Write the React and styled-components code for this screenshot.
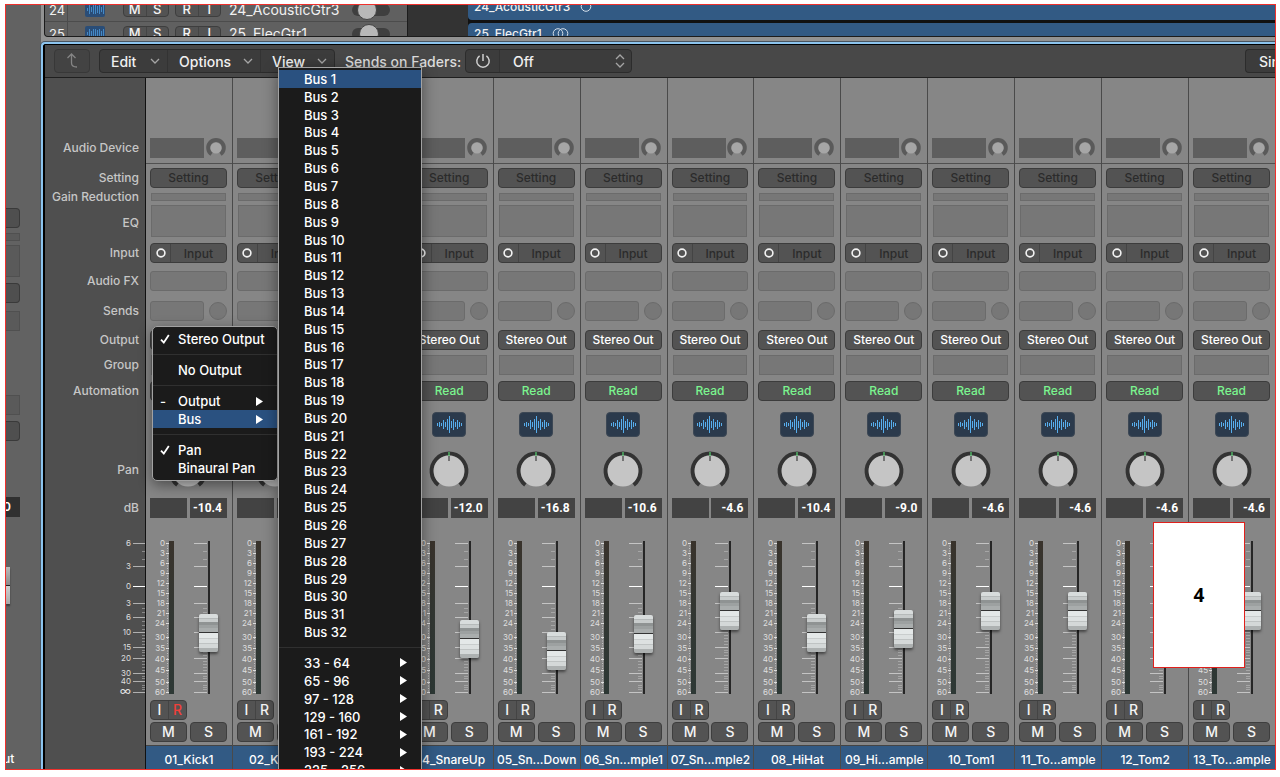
import React from "react";
import styled, { createGlobalStyle } from "styled-components";

const tracks = [
  { number: "24", name: "24_AcousticGtr3", volume: 5, stereo: false },
  { number: "25", name: "25_ElecGtr1", volume: 7, stereo: true },
];

const channels = [
  { name: "01_Kick1", db: "-10.4", level: 42, armed: true },
  { name: "02_Kick2", db: "-10.4", level: 42 },
  { name: "03_Snare", db: "-12.0", level: 36 },
  { name: "04_SnareUp", db: "-12.0", level: 36 },
  { name: "05_Sn...Down", db: "-16.8", level: 24 },
  { name: "06_Sn...mple1", db: "-10.6", level: 41 },
  { name: "07_Sn...mple2", db: "-4.6", level: 64 },
  { name: "08_HiHat", db: "-10.4", level: 42 },
  { name: "09_Hi...ample", db: "-9.0", level: 46 },
  { name: "10_Tom1", db: "-4.6", level: 64 },
  { name: "11_To...ample", db: "-4.6", level: 64 },
  { name: "12_Tom2", db: "-4.6", level: 64 },
  { name: "13_To...ample", db: "-4.6", level: 64 },
];

const buses = Array.from({ length: 32 }, (_, i) => `Bus ${i + 1}`);
const busRanges = [
  "33 - 64",
  "65 - 96",
  "97 - 128",
  "129 - 160",
  "161 - 192",
  "193 - 224",
  "225 - 256",
];

const meterMarks = [
  ["0", 2],
  ["3", 12],
  ["6", 22],
  ["9", 32],
  ["12", 42],
  ["15", 52],
  ["18", 62],
  ["21", 72],
  ["24", 82],
  ["30", 96],
  ["35", 107],
  ["40", 118],
  ["45", 129],
  ["50", 141],
  ["60", 151],
];

const faderMarks = [
  ["6", 2],
  ["3", 25],
  ["0", 45],
  ["3", 62],
  ["6", 76],
  ["10", 91],
  ["15", 106],
  ["20", 117],
  ["30", 132],
  ["40", 140],
  ["∞", 151],
];
const faderMinor = [
  10, 18, 67, 71, 80, 84, 88, 94, 97, 100, 103, 109, 111, 114, 120, 123, 126,
  129, 135, 137, 144, 146, 148,
];

// bar heights of the audio icon, left to right
const bars = [3, 5, 3, 9, 5, 11, 17, 7, 11, 5, 9, 5, 3];

function Wave() {
  return (
    <WaveBars aria-hidden="true">
      {bars.map((height, i) => (
        <WaveBar key={i} $height={height} />
      ))}
    </WaveBars>
  );
}

function Chevron() {
  return (
    <svg width="10" height="6" viewBox="0 0 10 6" fill="none" aria-hidden="true">
      <path d="M1 1l4 4 4-4" stroke="#a5a5a5" strokeWidth="1.3" />
    </svg>
  );
}

function Arrow() {
  return (
    <svg width="7" height="9" viewBox="0 0 7 9" aria-hidden="true">
      <path d="M0 0l7 4.5L0 9z" fill="#fff" />
    </svg>
  );
}

function Check() {
  return (
    <svg width="10" height="10" viewBox="0 0 10 10" fill="none" aria-hidden="true">
      <path d="M1 5.6l2.8 3L8.8 1" stroke="#fff" strokeWidth="1.8" />
    </svg>
  );
}

function MeterScale() {
  return (
    <svg width="19" height="156" viewBox="0 0 19 156" aria-hidden="true">
      <line
        x1="17.5"
        x2="17.5"
        y1="2"
        y2="152"
        stroke="#c2c2c2"
        strokeDasharray="1 1.5"
      />
      {meterMarks.map(([label, y]) => (
        <g key={label}>
          <rect x="16" y={y} width="3" height="1" fill="#dedede" />
          <ScaleText x="15" y={y + 3}>
            {label}
          </ScaleText>
        </g>
      ))}
    </svg>
  );
}

function FaderTicks() {
  return (
    <svg width="13" height="153" viewBox="0 0 13 153" aria-hidden="true">
      {faderMarks.map(([, y]) => (
        <rect
          key={y}
          x="0"
          y={y}
          width="13"
          height="1"
          fill={y === 45 ? "#fff" : "#c4c4c4"}
        />
      ))}
      {faderMinor.map((y) => (
        <rect key={y} x="9" y={y} width="4" height="1" fill="#a6a6a6" />
      ))}
    </svg>
  );
}

function FaderScale() {
  return (
    <svg width="26" height="156" viewBox="0 0 26 156" aria-hidden="true">
      {faderMarks.map(([label, y]) => (
        <g key={y}>
          <rect
            x="14"
            y={y}
            width="12"
            height="1"
            fill={y === 45 ? "#fff" : "#b0b0b0"}
          />
          <ScaleText x="12" y={y + 3} $large={label === "∞"}>
            {label}
          </ScaleText>
        </g>
      ))}
      {faderMinor.map((y) => (
        <rect key={y} x="23" y={y} width="3" height="1" fill="#8a8a8a" />
      ))}
    </svg>
  );
}

function Channel({ name, db, level, armed }) {
  return (
    <Strip>
      <Device>
        <DeviceSlot />
        <svg width="20" height="20" viewBox="0 0 20 20" aria-hidden="true">
          <path
            d="M5.6 16.2A7.8 7.8 0 1 1 14.4 16.2"
            fill="none"
            stroke="#5a5a5a"
            strokeWidth="4"
          />
          <circle cx="10" cy="10" r="5.6" fill="#a6a6a6" />
        </svg>
      </Device>
      <Cell>
        <SlotButton $color="#2b2b2b">Setting</SlotButton>
      </Cell>
      <Cell $inset>
        <Empty $height={8} />
      </Cell>
      <Cell $inset>
        <Empty $height={32} />
      </Cell>
      <Cell>
        <InputSlot>
          <FormatButton aria-label="Input format">
            <svg width="10" height="10" viewBox="0 0 10 10" aria-hidden="true">
              <circle
                cx="5"
                cy="5"
                r="3.9"
                fill="none"
                stroke="#f2f2f2"
                strokeWidth="1.6"
              />
            </svg>
          </FormatButton>
          <InputButton>Input</InputButton>
        </InputSlot>
      </Cell>
      <Cell>
        <Empty $height={20} $round />
      </Cell>
      <Cell>
        <Empty $height={20} $round />
        <SendKnob />
      </Cell>
      <Cell>
        <SlotButton $color="#fff">Stereo Out</SlotButton>
      </Cell>
      <Cell $inset>
        <Empty $height={20} />
      </Cell>
      <Cell>
        <SlotButton $color="#7bf58f">Read</SlotButton>
      </Cell>
      <Cell $center>
        <ChannelIcon>
          <Wave />
        </ChannelIcon>
      </Cell>
      <Cell $center>
        <svg
          width="40"
          height="38"
          viewBox="0 0 40 38"
          role="img"
          aria-label="Pan"
        >
          <path
            d="M9.4 33.8A17.4 17.4 0 1 1 30.6 33.8"
            fill="none"
            stroke="#333"
            strokeWidth="4"
          />
          <circle cx="20" cy="20" r="15.4" fill="#c5c5c5" />
          <rect x="19.5" y="1" width="1" height="4" fill="#5cf07c" />
          <rect x="19.5" y="5" width="1" height="5" fill="#222" />
        </svg>
      </Cell>
      <Cell>
        <Readout />
        <Readout>{db}</Readout>
      </Cell>
      <Cell>
        <MeterScale />
        <Meter />
        <FaderTicks />
        <Fader
          type="range"
          min="0"
          max="115"
          defaultValue={level}
          aria-label={`${name} volume`}
        />
      </Cell>
      <Cell>
        <Pair>
          <button>I</button>
          <RecordButton $armed={armed}>R</RecordButton>
        </Pair>
      </Cell>
      <Cell>
        <MuteButton>M</MuteButton>
        <MuteButton>S</MuteButton>
      </Cell>
      <ChannelName>{name}</ChannelName>
    </Strip>
  );
}

function Item({ label, mark, arrow, active }) {
  return (
    <li>
      <MenuButton $active={active}>
        <Mark>{mark}</Mark>
        {label}
        {arrow && <Arrow />}
      </MenuButton>
    </li>
  );
}

export default function App() {
  return (
    <>
      <GlobalStyle />
      <Frame>
        <Neighbour>
          <SideBox $height={20} $solid />
          <SideBox $height={8} $gap={5} />
          <SideBox $height={32} $gap={4} />
          <SideBox $height={20} $gap={6} $solid />
          <SideBox $height={20} $gap={8} />
          <SideBox $height={20} $gap={64} />
          <SideBox $height={20} $gap={6} $solid />
          <SideReadout>0</SideReadout>
          <SideThumb />
          <SideName>ut</SideName>
        </Neighbour>
        <Main>
          <Arrange>
            <TrackList>
              {tracks.map((track) => (
                <TrackRow key={track.number}>
                  <TrackNumber>{track.number}</TrackNumber>
                  <TrackIcon>
                    <Wave />
                  </TrackIcon>
                  <TrackPair>
                    <button>M</button>
                    <button>S</button>
                  </TrackPair>
                  <TrackPair>
                    <button>R</button>
                    <button>I</button>
                  </TrackPair>
                  <TrackName>{track.name}</TrackName>
                  <TrackVolume
                    type="range"
                    min="0"
                    max="18"
                    defaultValue={track.volume}
                    aria-label={`${track.name} volume`}
                  />
                </TrackRow>
              ))}
            </TrackList>
            <Regions>
              {tracks.map((track) => (
                <Region key={track.number}>
                  {track.name}
                  <svg
                    width="18"
                    height="11"
                    viewBox="0 0 18 11"
                    fill="none"
                    stroke="#d5dfea"
                    aria-hidden="true"
                  >
                    <circle cx="8" cy="5.5" r="4.8" />
                    {track.stereo && <circle cx="13" cy="5.5" r="4.8" />}
                  </svg>
                </Region>
              ))}
            </Regions>
          </Arrange>
          <Mixer>
            <Toolbar>
              <BackButton aria-label="Back">
                <svg
                  width="14"
                  height="16"
                  viewBox="0 0 14 16"
                  fill="none"
                  stroke="#858585"
                  strokeWidth="1.3"
                  aria-hidden="true"
                >
                  <path d="M2.500 5L6.500 1l4 4M6.500 1v9q0 4 5.500 4" />
                </svg>
              </BackButton>
              <ButtonGroup>
                <ToolButton $width={67}>
                  Edit <Chevron />
                </ToolButton>
                <ToolButton $width={93}>
                  Options <Chevron />
                </ToolButton>
                <ToolButton $width={74}>
                  View <Chevron />
                </ToolButton>
              </ButtonGroup>
              <SendsLabel htmlFor="sends">Sends on Faders:</SendsLabel>
              <ButtonGroup>
                <PowerButton aria-label="Sends on faders power">
                  <svg
                    width="16"
                    height="16"
                    viewBox="0 0 16 16"
                    fill="none"
                    stroke="#cfcfcf"
                    strokeWidth="1.5"
                    aria-hidden="true"
                  >
                    <path d="M8 1v7M4.600 2.800a6.200 6.200 0 1 0 6.800 0" />
                  </svg>
                </PowerButton>
                <SelectBox>
                  <select id="sends" defaultValue="Off">
                    <option>Off</option>
                  </select>
                  <svg
                    width="10"
                    height="14"
                    viewBox="0 0 10 14"
                    fill="none"
                    stroke="#a5a5a5"
                    strokeWidth="1.3"
                    aria-hidden="true"
                  >
                    <path d="M1 5l4-4 4 4M1 9l4 4 4-4" />
                  </svg>
                </SelectBox>
              </ButtonGroup>
              <EdgeButton>Single</EdgeButton>
            </Toolbar>
            <Console>
              <Labels>
                <Label>Audio Device</Label>
                <Label>Setting</Label>
                <Label $height={8}>Gain Reduction</Label>
                <Label $height={36}>EQ</Label>
                <Label>Input</Label>
                <Label>Audio FX</Label>
                <Label>Sends</Label>
                <Label>Output</Label>
                <Label>Group</Label>
                <Label>Automation</Label>
                <span />
                <Label $height={38}>Pan</Label>
                <Label>dB</Label>
                <FaderScale />
              </Labels>
              <Strips>
                {channels.map((channel) => (
                  <Channel key={channel.name} {...channel} />
                ))}
              </Strips>
            </Console>
          </Mixer>
        </Main>

        <OutputMenu>
          <ul>
            <Item label="Stereo Output" mark={<Check />} />
          </ul>
          <Divider />
          <ul>
            <Item label="No Output" />
          </ul>
          <Divider />
          <ul>
            <Item label="Output" mark="-" arrow />
            <Item label="Bus" arrow active />
          </ul>
          <Divider />
          <ul>
            <Item label="Pan" mark={<Check />} />
            <Item label="Binaural Pan" />
          </ul>
        </OutputMenu>

        <BusMenu>
          <BusList $height={571}>
            {buses.map((bus, i) => (
              <Item key={bus} label={bus} active={i === 0} />
            ))}
          </BusList>
          <Divider />
          <BusList $height={125}>
            {busRanges.map((range) => (
              <Item key={range} label={range} arrow />
            ))}
          </BusList>
        </BusMenu>

        <Callout>4</Callout>
      </Frame>
    </>
  );
}

const GlobalStyle = createGlobalStyle`
  * {
    box-sizing: border-box;
  }
  body {
    margin: 0;
    background: #fff;
    font-family: Inter, "Liberation Sans", sans-serif;
    font-size: 12px;
    overflow: hidden;
  }
  button, input, select {
    font: inherit;
    color: inherit;
    margin: 0;
    padding: 0;
    border: 0;
    background: none;
  }
  ul {
    list-style: none;
    margin: 0;
    padding: 0;
  }
  svg {
    display: block;
    flex: none;
    overflow: visible;
  }
`;
const Frame = styled.main`
  position: relative;
  display: flex;
  height: calc(100vh - 11px);
  margin: 4px 4px 7px 5px;
  border: 1px solid #f0302c;
  overflow: hidden;
`;
const Neighbour = styled.aside`
  width: 35px;
  flex: none;
  padding-top: 203px;
  background: #626262;
`;
const SideBox = styled.div`
  width: 14px;
  height: ${({ $height }) => $height}px;
  margin-top: ${({ $gap }) => $gap || 0}px;
  border: ${({ $solid }) => ($solid ? "1px solid #3a3a3a" : "1px solid #505050")};
  border-left: 0;
  border-radius: ${({ $solid }) => ($solid ? "0 4px 4px 0" : "0")};
  background: ${({ $solid }) => ($solid ? "#4f4f4f" : "#5a5a5a")};
`;
const SideReadout = styled.div`
  width: 14px;
  height: 20px;
  margin-top: 56px;
  line-height: 20px;
  background: #303030;
  color: #fff;
  font-weight: 600;
  text-indent: -3px;
`;
const SideThumb = styled.div`
  width: 4px;
  height: 37px;
  margin-top: 50px;
  background: linear-gradient(#bbb, #8c8c8c 48%, #222 50%, #cfcfcf 52%, #aaa);
  box-shadow: 0 2px 2px rgba(0, 0, 0, 0.4);
`;
const SideName = styled.div`
  margin-top: 147px;
  line-height: 16px;
  color: #fff;
  font-weight: 500;
  text-indent: -3px;
`;
const Main = styled.div`
  flex: 1;
  min-width: 0;
  display: flex;
  flex-direction: column;
  background: #929292;
`;
const Arrange = styled.section`
  display: flex;
  height: 32px;
  margin: 0 0 5px 3px;
  border: solid #1c1c1c;
  border-width: 0 0 1px 1px;
  border-radius: 0 0 0 4px;
  overflow: hidden;
  background: #333;
`;
const TrackList = styled.div`
  width: 363px;
  flex: none;
  margin-top: -7px;
  border-right: 1px solid #1c1c1c;
  background: #606060;
`;
const TrackRow = styled.div`
  display: flex;
  align-items: center;
  height: 24px;
  border-bottom: 1px solid #4c4c4c;
  color: #f0f0f0;
`;
const TrackNumber = styled.span`
  width: 23px;
  padding-left: 4px;
  line-height: 24px;
  border-right: 1px solid #4c4c4c;
  font-size: 13px;
`;
const WaveBars = styled.span`
  display: flex;
  align-items: center;
  gap: 1px;
`;
const WaveBar = styled.span`
  width: 1px;
  height: ${({ $height }) => $height}px;
  background: #57aeee;
`;
const TrackIcon = styled.span`
  display: flex;
  align-items: center;
  justify-content: center;
  width: 20px;
  height: 15px;
  margin: 0 18px 0 17px;
  border-radius: 2px;
  overflow: hidden;
  background: #2a4d77;
  ${WaveBar} {
    max-height: 9px;
    background: #4489c6;
  }
  ${WaveBar}:nth-child(-n + 2),
  ${WaveBar}:nth-last-child(-n + 2) {
    display: none;
  }
`;
const Pair = styled.div`
  display: flex;
  width: 37px;
  height: 20px;
  border: 1px solid #3e3e3e;
  border-radius: 4px;
  background: #535353;
  color: #f4f4f4;
  font-size: 14px;
  font-weight: 500;
  button {
    flex: 1;
    line-height: 18px;
  }
  button + button {
    border-left: 1px solid #444;
  }
`;
const TrackPair = styled(Pair)`
  width: 46px;
  height: 15px;
  margin-right: 6px;
  font-size: 13px;
  button {
    line-height: 13px;
  }
`;
const TrackName = styled.span`
  width: 125px;
  padding-left: 2px;
  font-size: 14px;
  white-space: nowrap;
`;
const TrackVolume = styled.input`
  appearance: none;
  width: 38px;
  height: 12px;
  border-radius: 6px;
  background: #3f3f3f;
  &::-webkit-slider-thumb {
    appearance: none;
    width: 20px;
    height: 20px;
    border-radius: 50%;
    border: 1px solid #444;
    background: #b8b8b8;
  }
`;
const Regions = styled.div`
  flex: 1;
  margin: -9px 0 0 60px;
  background: #111;
`;
const Region = styled.div`
  display: flex;
  align-items: center;
  gap: 8px;
  height: 24px;
  margin-bottom: 3px;
  padding: 0 0 3px 6px;
  border-radius: 4px 0 0 4px;
  background: #325a84;
  color: #f0f0f0;
  font-size: 12px;
  font-weight: 500;
`;
const Mixer = styled.section`
  flex: 1;
  min-height: 0;
  display: flex;
  flex-direction: column;
  border: solid #8cc4ee;
  border-width: 2px 0 0 2px;
  border-radius: 4px 0 0 0;
  box-shadow: 0 0 0 1px #4a5560;
  background: #000;
  padding: 1px 0 0 2px;
`;
const Toolbar = styled.div`
  display: flex;
  align-items: center;
  height: 33px;
  flex: none;
  padding-left: 9px;
  border-bottom: 1px solid #1f1f1f;
  background: #484848;
  color: #f0f0f0;
  font-size: 14px;
  font-weight: 500;
`;
const ButtonGroup = styled.div`
  display: flex;
  height: 24px;
  border: 1px solid #2c2c2c;
  border-radius: 4px;
  background: #3c3c3c;
`;
const BackButton = styled.button`
  display: flex;
  align-items: center;
  justify-content: center;
  width: 36px;
  height: 24px;
  margin-right: 9px;
  border: 1px solid #383838;
  border-radius: 4px;
  background: #434343;
`;
const ToolButton = styled.button`
  display: flex;
  align-items: center;
  justify-content: space-between;
  width: ${({ $width }) => $width}px;
  padding: 0 7px 0 11px;
  & + & {
    border-left: 1px solid #333;
  }
`;
const SendsLabel = styled.label`
  width: 130px;
  padding-left: 10px;
  color: #dcdcdc;
  white-space: nowrap;
`;
const PowerButton = styled.button`
  display: flex;
  align-items: center;
  justify-content: center;
  width: 34px;
  border-right: 1px solid #333;
`;
const SelectBox = styled.span`
  display: flex;
  align-items: center;
  width: 131px;
  padding: 0 6px 0 13px;
  select {
    appearance: none;
    flex: 1;
    outline: 0;
  }
`;
const EdgeButton = styled.button`
  width: 30px;
  height: 24px;
  margin-left: auto;
  padding-left: 13px;
  border: 1px solid #2c2c2c;
  border-right: 0;
  border-radius: 4px 0 0 4px;
  background: #3c3c3c;
  text-align: left;
  overflow: hidden;
`;
const Console = styled.div`
  flex: 1;
  min-height: 0;
  display: flex;
`;
// Labels and channel strips share the same rows so they line up.
const Rows = styled.div`
  display: grid;
  grid-template-rows:
    30px 25px 12px 38px 28px 30px 29px 25px 26px
    31px 39px 47px 43px 159px 22px 23px 1fr;
  align-items: start;
  padding-top: 60px;
`;
const Labels = styled(Rows)`
  width: 100px;
  flex: none;
  justify-items: end;
  background: #4f4f4f;
`;
const Label = styled.span`
  padding-right: 6px;
  line-height: ${({ $height }) => $height || 20}px;
  color: #c6c6c6;
  font-size: 12px;
  font-weight: 500;
  white-space: nowrap;
`;
const Strips = styled.div`
  flex: 1;
  min-width: 0;
  display: grid;
  grid-template-columns: repeat(13, minmax(0, 1fr));
`;
const Strip = styled(Rows)`
  grid-template-columns: minmax(0, 1fr);
  border-left: 1px solid #4a4a4a;
  background: #868686;
  &:first-child {
    border-left-color: #111;
  }
`;
const Cell = styled.div`
  display: flex;
  justify-content: ${({ $center }) => ($center ? "center" : "space-between")};
  padding: ${({ $inset }) => ($inset ? "0 6px 0 5px" : "0 5px 0 4px")};
`;
const Device = styled(Cell)`
  height: 26px;
  padding-right: 6px;
  border-bottom: 1px solid #505050;
`;
const DeviceSlot = styled.div`
  width: 54px;
  height: 20px;
  background: #5e5e5e;
`;
const SlotButton = styled.button`
  flex: 1;
  height: 20px;
  border: 1px solid #3c3c3c;
  border-radius: 4px;
  background: #535353;
  color: ${({ $color }) => $color};
  font-weight: 500;
  line-height: 18px;
  white-space: nowrap;
`;
const Empty = styled.div`
  flex: 1;
  height: ${({ $height }) => $height}px;
  border: 1px solid #6b6b6b;
  border-radius: ${({ $round }) => ($round ? 3 : 0)}px;
  background: #777;
`;
const SendKnob = styled.div`
  width: 18px;
  height: 18px;
  margin: 1px 0 0 5px;
  border: 1px solid #6b6b6b;
  border-radius: 50%;
  background: #777;
`;
const InputSlot = styled.div`
  flex: 1;
  display: flex;
  height: 20px;
  border: 1px solid #3c3c3c;
  border-radius: 4px;
  background: #535353;
`;
const FormatButton = styled.button`
  display: flex;
  align-items: center;
  justify-content: center;
  width: 20px;
  border-right: 1px solid #444;
`;
const InputButton = styled.button`
  flex: 1;
  color: #2b2b2b;
  font-weight: 500;
`;
const ChannelIcon = styled.div`
  display: flex;
  align-items: center;
  justify-content: center;
  width: 34px;
  height: 25px;
  border: 1px solid #3c4754;
  border-radius: 4px;
  background: #2b3a4c;
`;
const Readout = styled.span`
  width: 37px;
  height: 20px;
  padding-right: 5px;
  background: #434343;
  color: #fff;
  font-family: Roboto, "Liberation Sans", sans-serif;
  font-weight: 700;
  line-height: 20px;
  text-align: right;
`;
const ScaleText = styled.text`
  fill: #dedede;
  font-size: ${({ $large }) => ($large ? 12 : 8)}px;
  text-anchor: end;
`;
const Meter = styled.div`
  width: 5px;
  height: 153px;
  margin-right: auto;
  background: linear-gradient(#39332c, #323733 50%, #2d3835);
`;
const Fader = styled.input`
  appearance: none;
  writing-mode: vertical-lr;
  direction: rtl;
  width: 19px;
  height: 153px;
  margin: 0 9px 0 -8px;
  background: linear-gradient(#262626, #262626) 9px 0 / 2px 100% no-repeat;
  &::-webkit-slider-thumb {
    appearance: none;
    width: 19px;
    height: 38px;
    border-radius: 2px;
    background: linear-gradient(
      #d8dcdc 0 4px,
      #b6baba 4px 5px,
      #c8cccc 5px 8px,
      #8f9393 8px 11px,
      #9da1a1 11px 14px,
      #a9adad 14px 18px,
      #333 18px 19px,
      #e4e8e8 19px 24px,
      #c9cdcd 24px 25px,
      #dde1e1 25px 29px,
      #bfc3c3 29px 30px,
      #d4d8d8 30px 34px,
      #adb1b1 34px
    );
    box-shadow: 0 2px 3px rgba(0, 0, 0, 0.5);
  }
`;
const RecordButton = styled.button`
  color: ${({ $armed }) => ($armed ? "#f0403a" : "#f4f4f4")};
`;
const MuteButton = styled.button`
  width: 37px;
  height: 20px;
  border: 1px solid #3e3e3e;
  border-radius: 4px;
  background: #535353;
  color: #f4f4f4;
  font-size: 14px;
  font-weight: 500;
  line-height: 18px;
`;
const ChannelName = styled.div`
  align-self: stretch;
  padding-top: 6px;
  border-top: 1px solid #444;
  background: #325a84;
  color: #fff;
  font-weight: 500;
  line-height: 16px;
  text-align: center;
  white-space: nowrap;
  overflow: hidden;
`;
const Menu = styled.nav`
  position: absolute;
  border: 1px solid #a2a2a2;
  background: #1b1b1b;
  color: #fff;
  font-size: 13px;
  font-weight: 500;
  box-shadow: 0 4px 14px rgba(0, 0, 0, 0.45);
`;
const MenuButton = styled.button`
  display: flex;
  align-items: center;
  width: 100%;
  height: 100%;
  line-height: 18px;
  text-align: left;
  white-space: nowrap;
  background: ${({ $active }) => ($active ? "#2a5180" : "none")};
  > svg {
    margin-left: auto;
  }
`;
const Mark = styled.span`
  width: 25px;
  flex: none;
  padding-left: 7px;
`;
const Divider = styled.hr`
  height: 1px;
  margin: 6px 0;
  border: 0;
  background: #303030;
`;
const OutputMenu = styled(Menu)`
  top: 321px;
  left: 146px;
  width: 126px;
  padding: 3px 0;
  border-radius: 5px;
  ${MenuButton} {
    height: 18px;
    padding-right: 14px;
  }
`;
const BusMenu = styled(Menu)`
  top: 62px;
  left: 272px;
  width: 144px;
  padding-top: 2px;
  ${MenuButton} {
    padding-right: 14px;
  }
`;
const BusList = styled.ul`
  display: grid;
  grid-auto-rows: minmax(0, 1fr);
  height: ${({ $height }) => $height}px;
`;
const Callout = styled.div`
  position: absolute;
  top: 517px;
  right: 30px;
  display: flex;
  align-items: center;
  justify-content: center;
  width: 92px;
  height: 146px;
  border: 1px solid #e0201c;
  background: #fff;
  color: #000;
  font-family: "Open Sans", sans-serif;
  font-size: 19px;
  font-weight: 700;
`;
